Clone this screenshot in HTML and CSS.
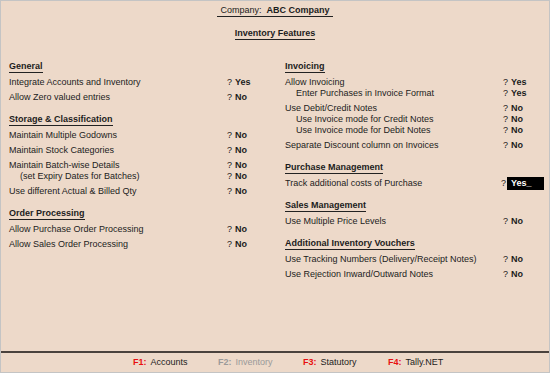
FILE: index.html
```html
<!DOCTYPE html>
<html>
<head>
<meta charset="utf-8">
<link rel="stylesheet" href="styles.css">
</head>
<body>
<div class="frame">
  <div class="main">
    <div class="title"><span class="company"> Company:  <b>ABC Company</b> </span></div>
    <div class="subtitle"><span>Inventory Features</span></div>
    <div class="cols">
      <div class="col">
        <div class="sec">
          <div class="hd"><span>General</span></div>
          <div class="grp">
            <div class="row"><span class="lbl">Integrate Accounts and Inventory</span><span class="q">?</span><span class="val">Yes</span></div>
          </div>
          <div class="grp">
            <div class="row"><span class="lbl">Allow Zero valued entries</span><span class="q">?</span><span class="val">No</span></div>
          </div>
        </div>
        <div class="sec">
          <div class="hd"><span>Storage &amp; Classification</span></div>
          <div class="grp">
            <div class="row"><span class="lbl">Maintain Multiple Godowns</span><span class="q">?</span><span class="val">No</span></div>
          </div>
          <div class="grp">
            <div class="row"><span class="lbl">Maintain Stock Categories</span><span class="q">?</span><span class="val">No</span></div>
          </div>
          <div class="grp">
            <div class="row"><span class="lbl">Maintain Batch-wise Details</span><span class="q">?</span><span class="val">No</span></div>
            <div class="row sub"><span class="lbl">(set Expiry Dates for Batches)</span><span class="q">?</span><span class="val">No</span></div>
          </div>
          <div class="grp">
            <div class="row"><span class="lbl">Use different Actual &amp; Billed Qty</span><span class="q">?</span><span class="val">No</span></div>
          </div>
        </div>
        <div class="sec">
          <div class="hd"><span>Order Processing</span></div>
          <div class="grp">
            <div class="row"><span class="lbl">Allow Purchase Order Processing</span><span class="q">?</span><span class="val">No</span></div>
          </div>
          <div class="grp">
            <div class="row"><span class="lbl">Allow Sales Order Processing</span><span class="q">?</span><span class="val">No</span></div>
          </div>
        </div>
      </div>
      <div class="col">
        <div class="sec">
          <div class="hd"><span>Invoicing</span></div>
          <div class="grp">
            <div class="row"><span class="lbl">Allow Invoicing</span><span class="q">?</span><span class="val">Yes</span></div>
            <div class="row sub"><span class="lbl">Enter Purchases in Invoice Format</span><span class="q">?</span><span class="val">Yes</span></div>
          </div>
          <div class="grp">
            <div class="row"><span class="lbl">Use Debit/Credit Notes</span><span class="q">?</span><span class="val">No</span></div>
            <div class="row sub"><span class="lbl">Use Invoice mode for Credit Notes</span><span class="q">?</span><span class="val">No</span></div>
            <div class="row sub"><span class="lbl">Use Invoice mode for Debit Notes</span><span class="q">?</span><span class="val">No</span></div>
          </div>
          <div class="grp">
            <div class="row"><span class="lbl">Separate Discount column on Invoices</span><span class="q">?</span><span class="val">No</span></div>
          </div>
        </div>
        <div class="sec">
          <div class="hd"><span>Purchase Management</span></div>
          <div class="grp">
            <div class="row active"><span class="lbl">Track additional costs of Purchase</span><span class="q">?</span><span class="val">Yes_</span></div>
          </div>
        </div>
        <div class="sec">
          <div class="hd"><span>Sales Management</span></div>
          <div class="grp">
            <div class="row"><span class="lbl">Use Multiple Price Levels</span><span class="q">?</span><span class="val">No</span></div>
          </div>
        </div>
        <div class="sec">
          <div class="hd"><span>Additional Inventory Vouchers</span></div>
          <div class="grp">
            <div class="row"><span class="lbl">Use Tracking Numbers (Delivery/Receipt Notes)</span><span class="q">?</span><span class="val">No</span></div>
          </div>
          <div class="grp">
            <div class="row"><span class="lbl">Use Rejection Inward/Outward Notes</span><span class="q">?</span><span class="val">No</span></div>
          </div>
        </div>
      </div>
    </div>
  </div>
  <div class="footer">
    <div class="fkey"><span class="k">F1:</span><span class="t">Accounts</span></div>
    <div class="fkey off"><span class="k">F2:</span><span class="t">Inventory</span></div>
    <div class="fkey"><span class="k">F3:</span><span class="t">Statutory</span></div>
    <div class="fkey"><span class="k">F4:</span><span class="t">Tally.NET</span></div>
  </div>
</div>
</body>
</html>
```
FILE: styles.css
```css
html, body {
  margin: 0;
  padding: 0;
}
body {
  background: #c4c4c4;
  font-family: "Liberation Sans", Arial, sans-serif;
  font-size: 9px;
  color: #1c1c1c;
  width: 550px;
  height: 373px;
  overflow: hidden;
}
.frame {
  margin: 1px;
  width: 548px;
  height: 371px;
  background: #edd9c9;
  display: flex;
  flex-direction: column;
}
.main {
  height: 350px;
  padding-top: 4px;
  box-sizing: border-box;
}
.title, .subtitle {
  text-align: center;
  line-height: 11px;
}
.company {
  display: inline-block;
  white-space: pre;
  border-bottom: 1px solid #222;
  padding: 0 1px;
}
.subtitle {
  margin-top: 11px;
}
.subtitle span {
  display: inline-block;
  font-weight: bold;
  border-bottom: 1px solid #222;
}
.cols {
  margin-top: 21px;
  display: grid;
  grid-template-columns: 276px 1fr;
  padding-left: 8px;
}
.sec {
  margin-top: 11px;
}
.sec:first-child {
  margin-top: 0;
}
.hd {
  line-height: 11px;
}
.hd span {
  display: inline-block;
  font-weight: bold;
  border-bottom: 1px solid #222;
}
.grp {
  margin-top: 4px;
}
.row {
  display: flex;
  line-height: 11px;
  height: 11px;
  white-space: nowrap;
}
.lbl {
  width: 218px;
  box-sizing: border-box;
}
.sub .lbl {
  padding-left: 11px;
}
.q {
  width: 8px;
}
.val {
  font-weight: bold;
}
.active .q {
  margin-left: -2px;
  width: 6px;
}
.active .val {
  display: inline-block;
  background: #000;
  color: #fff;
  height: 13px;
  line-height: 13px;
  margin-top: -1px;
  width: 37px;
  padding-left: 4px;
  box-sizing: border-box;
}
.footer {
  border-top: 2px solid #4a423d;
  flex: 1;
  display: flex;
  align-items: center;
  padding-left: 132px;
  line-height: 11px;
}
.fkey {
  width: 85px;
  display: flex;
}
.fkey .k {
  font-weight: bold;
  color: #e81010;
  margin-right: 4px;
}
.fkey.off .k, .fkey.off .t {
  color: #9a9a9a;
}
```
